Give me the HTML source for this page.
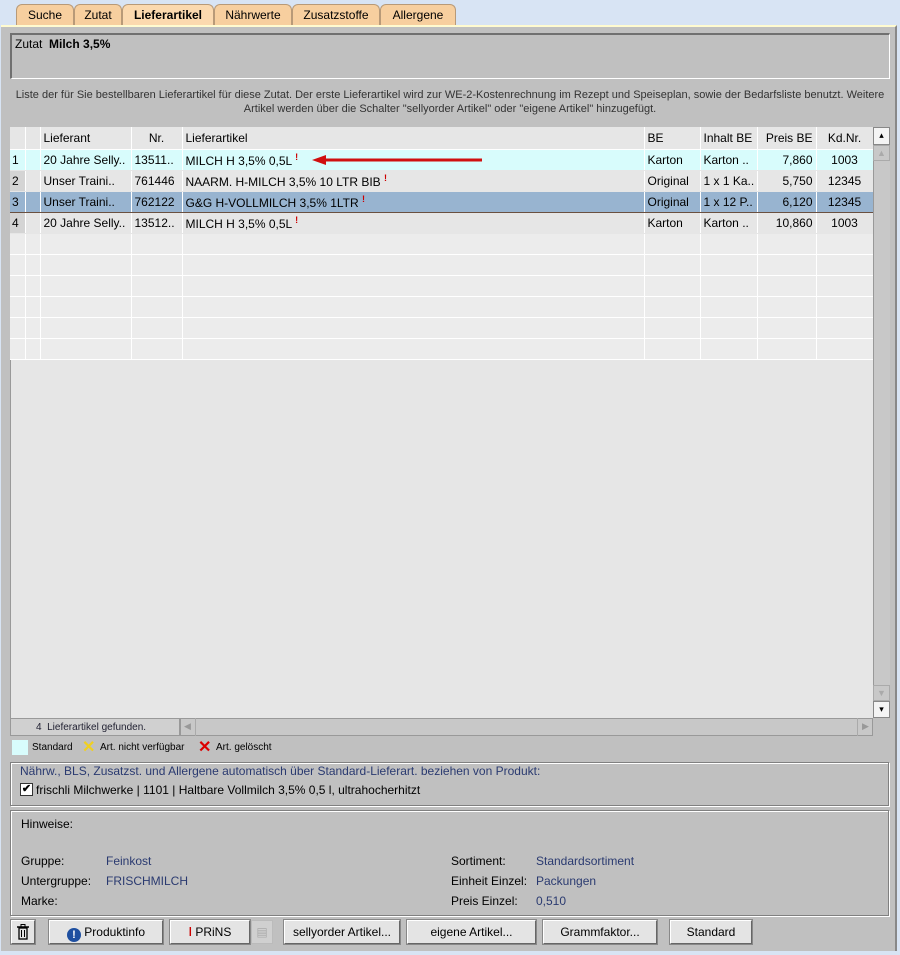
<!DOCTYPE html><html><head><meta charset="utf-8"><style>
*{box-sizing:border-box;margin:0;padding:0}
body{width:900px;height:955px;background:#d8e4f4;font-family:"Liberation Sans",sans-serif;font-size:12px;color:#000;position:relative;overflow:hidden}
.a{position:absolute}
.tab{position:absolute;top:4px;height:22px;background:#f7cf9f;border:1px solid #b89a78;border-bottom:none;border-radius:6px 6px 0 0;text-align:center;line-height:21px;font-size:12px}
.panel{left:1px;top:25px;width:896px;height:926px;background:#c0c0c0;border-top:2px solid #fffbd0;border-right:2px solid #888}
.grp{border:1px solid #808080;box-shadow:1px 1px 0 #fff inset,1px 1px 0 #fff}
table{border-collapse:collapse;table-layout:fixed;position:absolute;left:10px;top:127px;width:863px}
td{height:21px;border-right:1px solid #fff;border-bottom:1px solid #e6e6e6;padding:0 3px;white-space:nowrap;overflow:hidden;font-size:12px;background:#e6e6e6}
tr.e td{background:#ececec;border-bottom:1px solid #fff}
tr.h td{height:22px;background:#e6e6e6;border-bottom:1px solid #fff}
td.n{background:#d4d4d4;border-right:1px solid #fff;padding:0 2px}
tr.s1 td{background:#d8fcfc}
tr.s3 td{background:#98b4d0;border-top:1px solid #6a5040;border-bottom:1px solid #6a5040}
.r{text-align:right}.c{text-align:center}
sup{color:#c00;font-size:9px;font-weight:bold}
.btn{position:absolute;top:920px;height:24px;background:#e4e4e4;border:1px solid #fff;border-right-color:#666;border-bottom-color:#666;outline:1px solid #888;text-align:center;line-height:22px;font-size:12px}
.lbl{position:absolute;font-size:12px;color:#000}
.val{position:absolute;font-size:12px;color:#2a3a70}
</style></head><body>
<div class="tab" style="left:16px;width:58px">Suche</div>
<div class="tab" style="left:74px;width:48px">Zutat</div>
<div class="tab" style="left:122px;width:92px;background:#fbd9af;font-weight:bold;height:23px">Lieferartikel</div>
<div class="tab" style="left:214px;width:78px">Nährwerte</div>
<div class="tab" style="left:292px;width:88px">Zusatzstoffe</div>
<div class="tab" style="left:380px;width:76px">Allergene</div>
<div class="a panel"></div>
<div class="a" style="left:10px;top:33px;width:880px;height:46px;border-style:solid;border-width:2px 1px 1px 2px;border-color:#707070 #fff #fff #707070"></div>
<div class="a" style="left:15px;top:37px">Zutat &nbsp;<b>Milch 3,5%</b></div>
<div class="a" style="left:10px;top:88px;width:880px;text-align:center;font-size:11px;color:#333;line-height:14px">Liste der für Sie bestellbaren Lieferartikel für diese Zutat. Der erste Lieferartikel wird zur WE-2-Kostenrechnung im Rezept und Speiseplan, sowie der Bedarfsliste benutzt. Weitere<br>Artikel werden über die Schalter "sellyorder Artikel" oder "eigene Artikel" hinzugefügt.</div>
<div class="a" style="left:10px;top:127px;width:863px;height:591px;background:#e6e6e6;border-left:1px solid #999"></div>
<div class="a" style="left:10px;top:127px;width:15px;height:233px;background:#d4d4d4"></div>
<table>
<colgroup><col style="width:15px"><col style="width:15px"><col style="width:91px"><col style="width:51px"><col style="width:462px"><col style="width:56px"><col style="width:57px"><col style="width:59px"><col style="width:57px"></colgroup>
<tr class="h"><td class="n"></td><td></td><td>Lieferant</td><td class="c">Nr.</td><td>Lieferartikel</td><td>BE</td><td>Inhalt BE</td><td class="r">Preis BE</td><td class="c">Kd.Nr.</td></tr>
<tr class="s1"><td class="n">1</td><td></td><td>20 Jahre Selly..</td><td>13511..</td><td>MILCH H 3,5% 0,5L <sup>ǃ</sup></td><td>Karton</td><td>Karton ..</td><td class="r">7,860</td><td class="c">1003</td></tr>
<tr><td class="n">2</td><td></td><td>Unser Traini..</td><td>761446</td><td>NAARM. H-MILCH 3,5% 10 LTR BIB <sup>ǃ</sup></td><td>Original</td><td>1 x 1 Ka..</td><td class="r">5,750</td><td class="c">12345</td></tr>
<tr class="s3"><td class="n">3</td><td></td><td>Unser Traini..</td><td>762122</td><td>G&amp;G H-VOLLMILCH 3,5% 1LTR <sup>ǃ</sup></td><td>Original</td><td>1 x 12 P..</td><td class="r">6,120</td><td class="c">12345</td></tr>
<tr><td class="n">4</td><td></td><td>20 Jahre Selly..</td><td>13512..</td><td>MILCH H 3,5% 0,5L <sup>ǃ</sup></td><td>Karton</td><td>Karton ..</td><td class="r">10,860</td><td class="c">1003</td></tr>
<tr class="e"><td class="n"></td><td></td><td></td><td></td><td></td><td></td><td></td><td></td><td></td></tr>
<tr class="e"><td class="n"></td><td></td><td></td><td></td><td></td><td></td><td></td><td></td><td></td></tr>
<tr class="e"><td class="n"></td><td></td><td></td><td></td><td></td><td></td><td></td><td></td><td></td></tr>
<tr class="e"><td class="n"></td><td></td><td></td><td></td><td></td><td></td><td></td><td></td><td></td></tr>
<tr class="e"><td class="n"></td><td></td><td></td><td></td><td></td><td></td><td></td><td></td><td></td></tr>
<tr class="e"><td class="n"></td><td></td><td></td><td></td><td></td><td></td><td></td><td></td><td></td></tr>
</table>
<svg class="a" style="left:310px;top:153px" width="175" height="14"><line x1="172" y1="7" x2="14" y2="7" stroke="#d01010" stroke-width="3"/><polygon points="2,7 16,2 16,12" fill="#d01010"/></svg>
<div class="a" style="left:873px;top:127px;width:17px;height:591px;background:#c8c8c8;border-left:1px solid #999"></div>
<div class="a" style="left:873px;top:127px;width:17px;height:18px;background:#f4f4f4;border:1px solid #888;text-align:center;font-size:9px;line-height:15px">▴</div>
<div class="a" style="left:873px;top:145px;width:17px;height:16px;border:1px solid #aaa;text-align:center;color:#aaa;font-size:9px;line-height:14px">▲</div>
<div class="a" style="left:873px;top:685px;width:17px;height:16px;border:1px solid #aaa;text-align:center;color:#aaa;font-size:9px;line-height:14px">▼</div>
<div class="a" style="left:873px;top:701px;width:17px;height:17px;background:#f4f4f4;border:1px solid #888;text-align:center;font-size:9px;line-height:15px">▾</div>
<div class="a" style="left:10px;top:718px;width:170px;height:18px;background:#d0d0d0;border:1px solid #999;font-size:10px;line-height:16px;color:#223;padding-left:25px;padding-top:1px">4 &nbsp;Lieferartikel gefunden.</div>
<div class="a" style="left:180px;top:718px;width:693px;height:18px;background:#c8c8c8;border:1px solid #999"></div>
<div class="a" style="left:180px;top:718px;width:16px;height:18px;border-right:1px solid #aaa;color:#999;font-size:9px;line-height:16px;text-align:center">◀</div>
<div class="a" style="left:857px;top:718px;width:16px;height:18px;border-left:1px solid #aaa;color:#999;font-size:9px;line-height:16px;text-align:center">▶</div>
<div class="a" style="left:12px;top:740px;width:16px;height:15px;background:#d8fcfc"></div>
<div class="a" style="left:32px;top:742px;font-size:10px">Standard</div>
<div class="a" style="left:82px;top:737px;font-size:16px;color:#f0d020;font-weight:bold">✕</div>
<div class="a" style="left:100px;top:742px;font-size:10px">Art. nicht verfügbar</div>
<div class="a" style="left:198px;top:737px;font-size:16px;color:#d00;font-weight:bold">✕</div>
<div class="a" style="left:216px;top:742px;font-size:10px">Art. gelöscht</div>
<div class="a grp" style="left:10px;top:762px;width:879px;height:44px"></div>
<div class="a" style="left:20px;top:764px;color:#2a3a70">Nährw., BLS, Zusatzst. und Allergene automatisch über Standard-Lieferart. beziehen von Produkt:</div>
<div class="a" style="left:20px;top:783px;width:13px;height:13px;background:#fff;border:1px solid #333;font-size:11px;line-height:11px;text-align:center;font-weight:bold">✔</div>
<div class="a" style="left:36px;top:783px">frischli Milchwerke | 1101 | Haltbare Vollmilch 3,5% 0,5 l, ultrahocherhitzt</div>
<div class="a grp" style="left:10px;top:810px;width:879px;height:106px"></div>
<div class="lbl" style="left:21px;top:817px">Hinweise:</div>
<div class="lbl" style="left:21px;top:854px">Gruppe:</div><div class="val" style="left:106px;top:854px">Feinkost</div>
<div class="lbl" style="left:21px;top:874px">Untergruppe:</div><div class="val" style="left:106px;top:874px">FRISCHMILCH</div>
<div class="lbl" style="left:21px;top:894px">Marke:</div>
<div class="lbl" style="left:451px;top:854px">Sortiment:</div><div class="val" style="left:536px;top:854px">Standardsortiment</div>
<div class="lbl" style="left:451px;top:874px">Einheit Einzel:</div><div class="val" style="left:536px;top:874px">Packungen</div>
<div class="lbl" style="left:451px;top:894px">Preis Einzel:</div><div class="val" style="left:536px;top:894px">0,510</div>
<div class="btn" style="left:11px;width:24px"><svg width="12" height="16" style="margin-top:3px"><rect x="2" y="4" width="8" height="11" fill="none" stroke="#000" stroke-width="1.3"/><line x1="0" y1="3" x2="12" y2="3" stroke="#000" stroke-width="1.5"/><rect x="4" y="0.5" width="4" height="2.5" fill="none" stroke="#000"/><line x1="4.5" y1="6" x2="4.5" y2="13" stroke="#000"/><line x1="7.5" y1="6" x2="7.5" y2="13" stroke="#000"/></svg></div>
<div class="btn" style="left:49px;width:114px"><span style="display:inline-block;width:14px;height:14px;border-radius:7px;background:#1e4fa0;color:#fff;font-weight:bold;font-size:11px;line-height:14px;vertical-align:-2px">!</span> Produktinfo</div>
<div class="btn" style="left:170px;width:80px"><span style="color:#c00;font-weight:bold">ǀ</span> PRiNS</div>
<div class="a" style="left:251px;top:920px;width:22px;height:24px;background:#d0d0d0;border:1px solid #bbb;color:#aaa;text-align:center;line-height:22px">▤</div>
<div class="btn" style="left:284px;width:116px">sellyorder Artikel...</div>
<div class="btn" style="left:407px;width:129px">eigene Artikel...</div>
<div class="btn" style="left:543px;width:114px">Grammfaktor...</div>
<div class="btn" style="left:670px;width:82px">Standard</div>
</body></html>
